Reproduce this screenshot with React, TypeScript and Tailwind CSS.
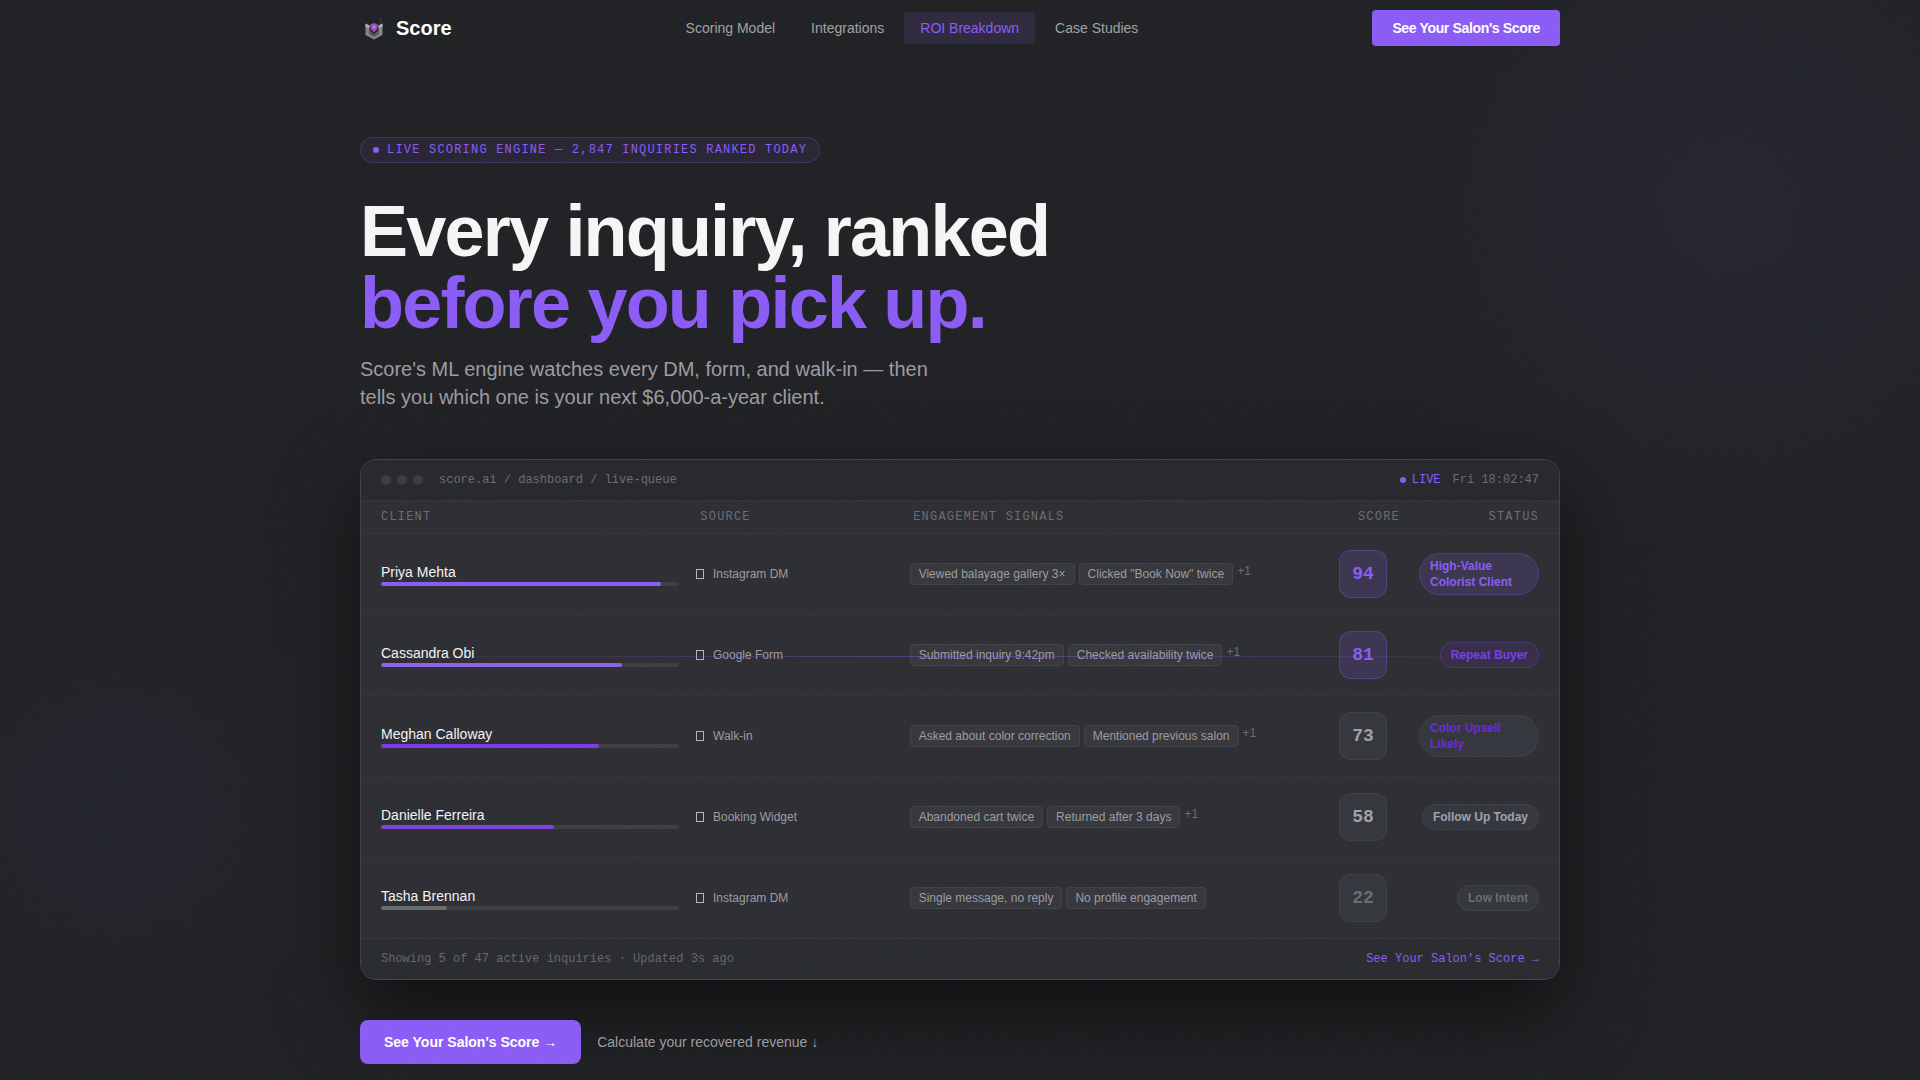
const NAV_LINKS = [
  { label: "Scoring Model", href: "#scoring", active: false },
  { label: "Integrations", href: "#integrations", active: false },
  { label: "ROI Breakdown", href: "#roi", active: true },
  { label: "Case Studies", href: "#cases", active: false },
];

const HOT_BOX = "border-[#8b5cf6]/30 bg-[#8b5cf6]/15 text-[#8b5cf6]";
const WARM_BOX = "border-white/5 bg-[#34363d] text-[#a1a1aa]";
const COLD_BOX = "border-white/5 bg-[#34363d] text-[#6b6c71]";

const INQUIRIES = [
  {
    name: "Priya Mehta",
    source: "Instagram DM",
    signals: ["Viewed balayage gallery 3×", 'Clicked "Book Now" twice'],
    more: 1,
    score: 94,
    bar: "bg-[#8b5cf6]",
    box: HOT_BOX,
    status: "High-Value Colorist Client",
    pill: "border-[#8b5cf6]/25 bg-[#8b5cf6]/15 text-[#8b5cf6]",
  },
  {
    name: "Cassandra Obi",
    source: "Google Form",
    signals: ["Submitted inquiry 9:42pm", "Checked availability twice"],
    more: 1,
    score: 81,
    bar: "bg-[#8b62e8]",
    box: HOT_BOX,
    status: "Repeat Buyer",
    pill: "border-[#7c3aed]/30 bg-[#7c3aed]/10 text-[#7c3aed]",
  },
  {
    name: "Meghan Calloway",
    source: "Walk-in",
    signals: ["Asked about color correction", "Mentioned previous salon"],
    more: 1,
    score: 73,
    bar: "bg-[#7c3aed]",
    box: WARM_BOX,
    status: "Color Upsell Likely",
    pill: "border-white/5 bg-[#34363d] text-[#6d28d9]",
  },
  {
    name: "Danielle Ferreira",
    source: "Booking Widget",
    signals: ["Abandoned cart twice", "Returned after 3 days"],
    more: 1,
    score: 58,
    bar: "bg-[#7c43dc]",
    box: WARM_BOX,
    status: "Follow Up Today",
    pill: "border-white/5 bg-[#34363d] text-[#a1a1aa]",
  },
  {
    name: "Tasha Brennan",
    source: "Instagram DM",
    signals: ["Single message, no reply", "No profile engagement"],
    more: 0,
    score: 22,
    bar: "bg-[#6b6c71]",
    box: COLD_BOX,
    status: "Low Intent",
    pill: "border-white/5 bg-[#34363d] text-[#6b6c71]",
  },
];

function Logo() {
  return (
    <svg viewBox="0 0 28 28" className="h-7 w-7" aria-hidden="true">
      <path d="M5.5 9.5l4 2v8.6l4.5 2.4 4.5-2.4v-8.6l4-2v11.6L14 25.6l-8.5-4.5z" fill="#85858b" />
      <path d="M5.5 9.5l4 2v2.6l-4-1.2zM22.5 9.5l-4 2v2.6l4-1.2z" fill="#b0b0b5" />
      <path d="M9.5 16v4.1l4.5 2.4 4.5-2.4V16L14 20.5z" fill="#5a5a60" />
      <path d="M10 10.5l4-1.5 4 1.5-1 5-3 3-3-3z" fill="#9747b5" />
      <circle cx="14" cy="13" r="2" fill="#c26be0" />
      <path d="M20.5 3v6" stroke="#3c3d42" strokeWidth="1" />
    </svg>
  );
}

function Grain() {
  return (
    <svg className="pointer-events-none absolute inset-0 h-full w-full opacity-[0.03]" aria-hidden="true">
      <filter id="grain">
        <feTurbulence type="fractalNoise" baseFrequency="0.9" numOctaves="4" stitchTiles="stitch" />
      </filter>
      <rect width="100%" height="100%" filter="url(#grain)" />
    </svg>
  );
}

function SiteHeader() {
  return (
    <header className="border-b border-transparent">
      <div className="mx-auto flex h-14 max-w-[1200px] items-center justify-between">
        <a href="#top" className="flex items-center gap-2">
          <Logo />
          <span className="text-xl font-bold text-white">Score</span>
        </a>
        <nav className="flex items-center gap-1">
          {NAV_LINKS.map((link) => (
            <a
              key={link.label}
              href={link.href}
              className={`rounded-sm px-4 py-1.5 text-sm ${
                link.active ? "bg-[#2e293e] text-[#8b5cf6]" : "text-[#a1a1a6]"
              }`}
            >
              {link.label}
            </a>
          ))}
        </nav>
        <button type="button" className="rounded-sm bg-[#8b5cf6] px-5 py-2 text-sm font-bold tracking-tight text-white">
          See Your Salon's Score
        </button>
      </div>
    </header>
  );
}

function QueueCard() {
  return (
    <div className="relative overflow-hidden rounded-2xl border border-[#404147] bg-[#2d2e33] shadow-[0_32px_80px_rgba(0,0,0,0.6)]">
      <div className="flex h-10 items-center justify-between bg-[#27282c] px-5 font-['Liberation_Mono',monospace] text-xs text-[#6b6c71]">
        <div className="flex items-center gap-4">
          <div className="flex gap-1.5">
            <span className="h-2.5 w-2.5 rounded-full bg-[#3b3c40]" />
            <span className="h-2.5 w-2.5 rounded-full bg-[#3b3c40]" />
            <span className="h-2.5 w-2.5 rounded-full bg-[#3b3c40]" />
          </div>
          <span>score.ai / dashboard / live-queue</span>
        </div>
        <div className="flex items-center gap-3">
          <span className="flex items-center gap-1.5 text-[#8b5cf6]">
            <span className="h-1.5 w-1.5 rounded-full bg-[#8b5cf6]" />
            LIVE
          </span>
          <span>Fri 18:02:47</span>
        </div>
      </div>

      <table className="block">
        <thead className="block">
          <tr className="grid grid-cols-[3fr_2fr_4fr_80px_120px] border-y border-[#34353a] px-5 py-2 font-['Liberation_Mono',monospace] text-xs tracking-widest text-[#6b6c71] uppercase">
            <th className="text-left font-normal">Client</th>
            <th className="text-left font-normal">Source</th>
            <th className="text-left font-normal">Engagement Signals</th>
            <th className="text-center font-normal">Score</th>
            <th className="text-right font-normal">Status</th>
          </tr>
        </thead>
        <tbody className="block divide-y divide-[#323338]">
          {INQUIRIES.map((item) => (
            <tr key={item.name} className="grid grid-cols-[3fr_2fr_4fr_80px_120px] items-center gap-4 px-5 py-4">
              <td>
                <div className="text-sm text-[#f4f4f5]">{item.name}</div>
                <div className="h-1 overflow-hidden rounded-full bg-[#3d3e42]">
                  <div className={`h-full rounded-full ${item.bar}`} style={{ width: `${item.score}%` }} />
                </div>
              </td>
              <td className="flex items-center gap-1.5 text-xs text-[#9c9ca2]">
                <span className="flex w-3 pl-px">
                  <span className="h-2.5 w-2 border border-[#b4b4b9]" />
                </span>
                {item.source}
              </td>
              <td className="flex flex-wrap items-start gap-1 text-xs">
                {item.signals.map((signal) => (
                  <span key={signal} className="rounded-sm border border-[#414247] bg-[#36373c] px-2 py-0.5 text-[#9c9ca2]">
                    {signal}
                  </span>
                ))}
                {item.more > 0 && <span className="text-[#6b6c71]">+{item.more}</span>}
              </td>
              <td className="flex justify-center">
                <span
                  className={`flex h-12 w-12 items-center justify-center rounded-xl border font-['Liberation_Mono',monospace] text-lg font-bold ${item.box}`}
                >
                  {item.score}
                </span>
              </td>
              <td className="flex justify-end">
                <span className={`rounded-3xl border px-2.5 py-1 text-xs font-bold ${item.pill}`}>{item.status}</span>
              </td>
            </tr>
          ))}
        </tbody>
      </table>

      <div className="flex items-center justify-between border-t border-[#34353a] bg-[#292b2f] px-5 py-3 font-['Liberation_Mono',monospace] text-xs text-[#66676c]">
        <span>Showing 5 of 47 active inquiries · Updated 3s ago</span>
        <a href="#demo" className="text-[#8b5cf6]">
          See Your Salon's Score →
        </a>
      </div>

      {/* scan line */}
      <div className="pointer-events-none absolute inset-x-0 top-[38%] -mt-px h-px bg-linear-to-r from-transparent via-[#8b5cf6]/40 to-transparent" />
    </div>
  );
}

export default function App() {
  return (
    <div
      id="top"
      className="relative min-h-screen overflow-hidden bg-[#202124] bg-[radial-gradient(ellipse_380px_360px_at_90%_19%,rgba(110,92,246,0.06),transparent),radial-gradient(ellipse_240px_240px_at_6%_75%,rgba(90,80,230,0.05),transparent)] font-['Liberation_Sans',Arial,sans-serif]"
    >
      <SiteHeader />
      <main className="mx-auto max-w-[1200px] pt-20">
        <div className="flex w-fit items-center gap-2 rounded-full border border-[#8b5cf6]/25 bg-[#8b5cf6]/8 px-3 py-1 font-['Liberation_Mono',monospace] text-xs tracking-widest text-[#8b5cf6]">
          <span className="h-1.5 w-1.5 rounded-full bg-[#8b5cf6]" />
          LIVE SCORING ENGINE — 2,847 INQUIRIES RANKED TODAY
        </div>
        <h1 className="mt-8 text-7xl leading-none font-bold tracking-tight text-[#f5f7f7]">
          Every inquiry, ranked
          <span className="block text-[#8b5cf6]">before you pick up.</span>
        </h1>
        <p className="mt-4 max-w-[600px] text-xl leading-7 text-[#9c9ca2]">
          Score's ML engine watches every DM, form, and walk-in — then tells you which one is your next $6,000-a-year
          client.
        </p>
        <section className="mt-12">
          <QueueCard />
        </section>
        <div className="relative mt-10 flex items-center gap-4 text-sm">
          <button type="button" className="rounded-lg bg-[#8b5cf6] px-6 py-3 font-bold text-white">
            See Your Salon's Score →
          </button>
          <a href="#roi" className="text-[#9c9ca2]">
            Calculate your recovered revenue ↓
          </a>
        </div>
      </main>
      <Grain />
    </div>
  );
}
